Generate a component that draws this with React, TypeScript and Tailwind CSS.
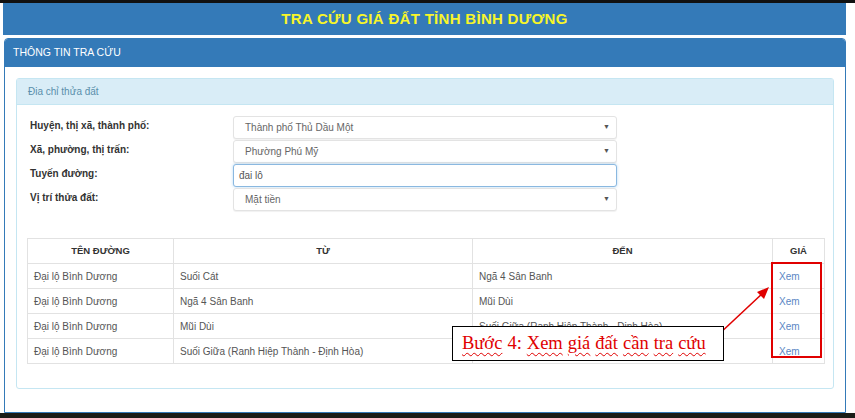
import React from "react"

const rows = [
  { ten: "Đại lộ Bình Dương", tu: "Suối Cát", den: "Ngã 4 Sân Banh" },
  { ten: "Đại lộ Bình Dương", tu: "Ngã 4 Sân Banh", den: "Mũi Dùi" },
  { ten: "Đại lộ Bình Dương", tu: "Mũi Dùi", den: "Suối Giữa (Ranh Hiệp Thành - Định Hòa)" },
  { ten: "Đại lộ Bình Dương", tu: "Suối Giữa (Ranh Hiệp Thành - Định Hòa)", den: "" },
]

const fields = [
  { label: "Huyện, thị xã, thành phố:", value: "Thành phố Thủ Dầu Một", select: true },
  { label: "Xã, phường, thị trấn:", value: "Phường Phú Mỹ", select: true },
  { label: "Tuyến đường:", value: "đai lô", select: false },
  { label: "Vị trí thửa đất:", value: "Mặt tiền", select: true },
]

function Squiggle({ children }: { children: React.ReactNode }) {
  return (
    <span className="underline decoration-wavy decoration-[#e00000] decoration-1 underline-offset-[3px]">
      {children}
    </span>
  )
}

export default function App() {
  return (
    <div className="relative w-[855px] h-[418px] bg-white flex flex-col overflow-hidden font-['Liberation_Sans',Arial,sans-serif]">
      <div className="h-[3px] bg-[#111111] shrink-0" />

      {/* Title */}
      <div className="ml-[3px] w-[843px] h-[32px] shrink-0 bg-[#347ab8] flex items-center justify-center text-[#f7f52a] font-bold text-[15px] tracking-[0.3px]">
        TRA CỨU GIÁ ĐẤT TỈNH BÌNH DƯƠNG
      </div>

      {/* Outer panel */}
      <div className="mt-[3px] ml-[4px] w-[842px] h-[375px] shrink-0 border border-[#347ab8] rounded-t-[4px] flex flex-col">
        <div className="h-[28px] bg-[#347ab8] text-white text-[10.5px] flex items-center px-[8px] rounded-t-[3px]">
          THÔNG TIN TRA CỨU
        </div>

        <div className="px-[11px] pt-[11px]">
          {/* Inner panel */}
          <div className="h-[311px] border border-[#c5e6f2] rounded-[3px] flex flex-col">
            <div className="h-[26px] bg-[#d9edf7] border-b border-[#c5e6f2] text-[#5a8fab] text-[10px] flex items-center px-[11px]">
              Đia chỉ thửa đất
            </div>

            <div className="pt-[11px] pl-[13px] flex flex-col gap-[1px]">
              {fields.map((f) => (
                <div key={f.label} className="flex h-[23px]">
                  <div className="w-[203px] pt-[2px] text-[10px] font-bold text-[#333333]">{f.label}</div>
                  <div
                    className={
                      f.select
                        ? "w-[384px] h-[23px] border border-[#e3e3e3] rounded-[3px] bg-white flex items-center justify-between pl-[11px] pr-[6px] text-[10px] text-[#666666] shadow-[0_1px_1px_rgba(0,0,0,0.06)]"
                        : "w-[384px] h-[23px] border border-[#8ab8e0] rounded-[3px] bg-white flex items-center pl-[5px] text-[10px] text-[#555555] shadow-[0_0_3px_rgba(102,175,233,0.5)]"
                    }
                  >
                    <span>{f.value}</span>
                    {f.select && <span className="text-[7px] text-[#555555]">▼</span>}
                  </div>
                </div>
              ))}
            </div>

            {/* Result table */}
            <div className="mt-[27px] ml-[10px] w-[797px]">
              <table className="w-full border-collapse text-[10px] text-[#555555] table-fixed">
                <colgroup>
                  <col className="w-[146px]" />
                  <col className="w-[299px]" />
                  <col className="w-[300px]" />
                  <col className="w-[52px]" />
                </colgroup>
                <thead>
                  <tr className="h-[25px]">
                    {["TÊN ĐƯỜNG", "TỪ", "ĐẾN", "GIÁ"].map((h) => (
                      <th key={h} className="border border-[#e2e2e2] text-center font-bold text-[9.5px] text-[#333333]">
                        {h}
                      </th>
                    ))}
                  </tr>
                </thead>
                <tbody>
                  {rows.map((r, i) => (
                    <tr key={i} className="h-[25px]">
                      <td className="border border-[#e2e2e2] px-[6px] whitespace-nowrap overflow-hidden">{r.ten}</td>
                      <td className="border border-[#e2e2e2] px-[6px] whitespace-nowrap overflow-hidden">{r.tu}</td>
                      <td className="border border-[#e2e2e2] px-[6px] whitespace-nowrap overflow-hidden">{r.den}</td>
                      <td className="border border-[#e2e2e2] px-[6px] text-[#5b86c4]">Xem</td>
                    </tr>
                  ))}
                </tbody>
              </table>
            </div>
          </div>
        </div>
      </div>

      <div className="flex-1 bg-[#1b1d18]" />

      {/* Annotation overlay */}
      <div className="absolute left-[771px] top-[262px] w-[51px] h-[96px] border-2 border-[#e00000]" />
      <svg className="absolute left-0 top-0" width="855" height="418" viewBox="0 0 855 418">
        <line x1="702" y1="350" x2="764" y2="292" stroke="#e00000" strokeWidth="1.6" />
        <polygon points="769,287 757,292 764,299" fill="#e00000" />
      </svg>
      <div className="absolute left-[452px] top-[326px] w-[272px] h-[35px] bg-white border border-black flex items-center pl-[9px] font-['Liberation_Serif','Times_New_Roman',serif] text-[18.5px] text-[#e00000] leading-none gap-[5px]">
        <Squiggle>Bước</Squiggle>
        <span>4:</span>
        <Squiggle>Xem</Squiggle>
        <Squiggle>giá</Squiggle>
        <Squiggle>đất</Squiggle>
        <Squiggle>cần</Squiggle>
        <Squiggle>tra</Squiggle>
        <Squiggle>cứu</Squiggle>
      </div>
    </div>
  )
}
